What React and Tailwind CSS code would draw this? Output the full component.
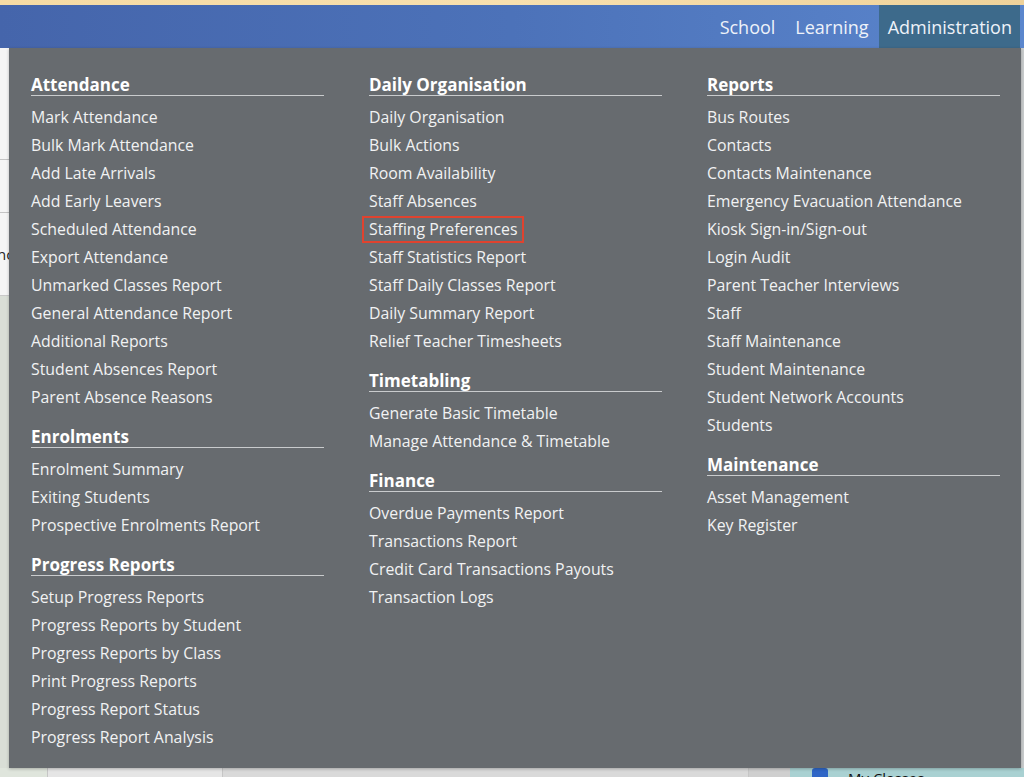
import React from "react";

const columns = [
  [
    {
      title: "Attendance",
      items: [
        "Mark Attendance",
        "Bulk Mark Attendance",
        "Add Late Arrivals",
        "Add Early Leavers",
        "Scheduled Attendance",
        "Export Attendance",
        "Unmarked Classes Report",
        "General Attendance Report",
        "Additional Reports",
        "Student Absences Report",
        "Parent Absence Reasons",
      ],
    },
    {
      title: "Enrolments",
      items: ["Enrolment Summary", "Exiting Students", "Prospective Enrolments Report"],
    },
    {
      title: "Progress Reports",
      items: [
        "Setup Progress Reports",
        "Progress Reports by Student",
        "Progress Reports by Class",
        "Print Progress Reports",
        "Progress Report Status",
        "Progress Report Analysis",
      ],
    },
  ],
  [
    {
      title: "Daily Organisation",
      items: [
        "Daily Organisation",
        "Bulk Actions",
        "Room Availability",
        "Staff Absences",
        "Staffing Preferences",
        "Staff Statistics Report",
        "Staff Daily Classes Report",
        "Daily Summary Report",
        "Relief Teacher Timesheets",
      ],
    },
    {
      title: "Timetabling",
      items: ["Generate Basic Timetable", "Manage Attendance & Timetable"],
    },
    {
      title: "Finance",
      items: [
        "Overdue Payments Report",
        "Transactions Report",
        "Credit Card Transactions Payouts",
        "Transaction Logs",
      ],
    },
  ],
  [
    {
      title: "Reports",
      items: [
        "Bus Routes",
        "Contacts",
        "Contacts Maintenance",
        "Emergency Evacuation Attendance",
        "Kiosk Sign-in/Sign-out",
        "Login Audit",
        "Parent Teacher Interviews",
        "Staff",
        "Staff Maintenance",
        "Student Maintenance",
        "Student Network Accounts",
        "Students",
      ],
    },
    {
      title: "Maintenance",
      items: ["Asset Management", "Key Register"],
    },
  ],
];

const font = { fontFamily: '"Open Sans", "Noto Sans", sans-serif' };

function MenuSection({ title, items }) {
  return (
    <div className="mb-[15px]">
      <div className="h-[22px] border-b border-[#c9cbcd] text-[17px] font-bold leading-[22px] text-white">
        {title}
      </div>
      <ul className="mt-[7px]">
        {items.map((item) => (
          <li key={item} className="relative h-[28px] text-[15.85px] leading-[28px] text-[#f1f2f3]">
            {item === "Staffing Preferences" ? (
              <span className="-ml-[7px] inline-block h-[27px] border-2 border-[#e0432f] px-[5px] leading-[23px]">
                {item}
              </span>
            ) : (
              item
            )}
          </li>
        ))}
      </ul>
    </div>
  );
}

export default function App() {
  return (
    <div className="relative h-[777px] w-[1024px] overflow-hidden bg-[#f3f3f3]" style={font}>
      {/* top strip */}
      <div className="h-[5px] bg-gradient-to-r from-[#f6dba4] via-[#f8e0ae] to-[#efd29a]" />

      {/* main navigation */}
      <nav className="flex h-[43px] items-stretch justify-end bg-gradient-to-r from-[#4565ab] via-[#4c72b9] to-[#5b86cd] pr-[4px] text-[18px] text-[#eef2f9]">
        <a className="flex items-center px-[10px] pt-[2px]">School</a>
        <a className="flex items-center px-[10px] pt-[2px]">Learning</a>
        <a className="flex items-center bg-[#3d6a8b] pl-[9px] pr-[8px] pt-[2px]">Administration</a>
      </nav>

      {/* page content behind the menu */}
      <div className="flex h-[729px]">
        <div className="flex w-[790px] flex-col">
          <div className="h-[112px] border-b border-[#c4c4c4] bg-[#f5f5f5]" />
          <div className="h-[53px] border-b border-[#c4c4c4] bg-[#f5f5f5]" />
          <div className="flex h-[83px] items-center border-b border-[#c9c9c9] bg-[#f5f5f5] text-[15px] text-[#222]">
            <span className="-ml-[3px]">nc</span>
          </div>
          <div className="flex-1 bg-[#d9ded6]" />
          <div className="flex h-[9px] bg-[#dcdcdc]">
            <div className="w-[47px] bg-[#dfe5dc]" />
            <div className="w-[175px] border-l border-[#c6c6c6] bg-[#e5e5e5]" />
            <div className="w-[526px] border-l border-[#c6c6c6] bg-[#d9d9d9]" />
            <div className="flex-1 border-l border-[#c6c6c6] bg-[#cfcfcf]" />
          </div>
        </div>
        <div className="flex flex-1 flex-col bg-[#c9cccd]">
          <div className="flex-1" />
          <div className="flex h-[9px] items-start gap-[20px] bg-[#a9d1d2] pl-[22px]">
            <div className="h-[9px] w-[16px] rounded-t-[3px] bg-[#2f66c6]" />
            <span className="text-[15px] leading-[20px] text-[#111]">My Classes</span>
          </div>
        </div>
      </div>

      {/* administration dropdown */}
      <div className="absolute left-[9px] top-[48px] h-[720px] w-[1012px] bg-[#676b6f] pl-[22px] pt-[26px] shadow-[0_1px_3px_rgba(0,0,0,0.25)]">
        <div className="grid grid-cols-[293px_293px_293px] gap-x-[45px]">
          {columns.map((sections, i) => (
            <div key={i}>
              {sections.map((s) => (
                <MenuSection key={s.title} {...s} />
              ))}
            </div>
          ))}
        </div>
      </div>
    </div>
  );
}
